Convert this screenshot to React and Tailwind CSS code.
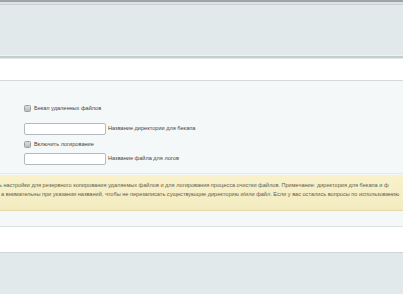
export default function App() {
  const font = { fontFamily: '"Liberation Sans", Arial, sans-serif' };
  const Check = ({ label }) => (
    <div className="flex items-center h-[7px] gap-[3px]">
      <div className="w-[7px] h-[7px] rounded-[1.5px] border border-[#9a9fa3] bg-gradient-to-b from-[#dcdcdc] to-[#b9bcbe]" />
      <span className="text-[5.6px] leading-none text-[#444444]">{label}</span>
    </div>
  );
  const Field = ({ label }) => (
    <div className="flex items-center gap-[2px] h-[12px]">
      <div className="w-[82px] h-[12px] rounded-[2px] border border-[#b4bbbf] bg-white" />
      <span className="text-[5.6px] leading-none text-[#444444]">{label}</span>
    </div>
  );
  return (
    <div className="w-[403px] h-[294px] overflow-hidden bg-white flex flex-col" style={font}>
      <div className="h-[2px] bg-[#9ea5a8]" />
      <div className="h-[2px] bg-[#dde3e5]" />
      <div className="h-[1px] bg-[#c9d0d3]" />
      <div className="h-[50px] bg-[#e2e9eb]" />
      <div className="h-[1px] bg-[#edf1f2]" />
      <div className="h-[2px] bg-[#c6cdd0]" />
      <div className="h-[1px] bg-[#e3e7e8]" />
      <div className="h-[21px] bg-white" />
      <div className="h-[1px] bg-[#d4d9db]" />
      <div className="bg-[#f4f8f9] flex flex-col">
        <div className="pl-[24px] pt-[24px] flex flex-col">
          <Check label="Бекап удаленных файлов" />
          <div className="h-[11px]" />
          <Field label="Название директории для бекапа" />
          <div className="h-[6px]" />
          <Check label="Включить логирование" />
          <div className="h-[5px]" />
          <Field label="Название файла для логов" />
        </div>
        <div className="h-[8px]" />
        <div className="h-[1px] bg-[#e4e8e9]" />
        <div className="h-[1px]" />
        <div className="h-[36px] bg-gradient-to-b from-[#f8f1cb] to-[#f3ebc0] border-b border-[#e2d9a6] flex flex-col pt-[6px] overflow-hidden">
          <p className="whitespace-nowrap text-[5.6px] leading-[9px] text-[#5e5d50] -ml-[1px]">
            ь настройки для резервного копирования удаляемых файлов и для логирования процесса очистки файлов. Примечание: директория для бекапа и ф
          </p>
          <p className="whitespace-nowrap text-[5.6px] leading-[9px] text-[#5e5d50] ml-[1px]">
            а внимательны при указании названий, чтобы не перезаписать существующие директорию и/или файл. Если у вас остались вопросы по использованию
          </p>
        </div>
        <div className="h-[15px]" />
      </div>
      <div className="h-[1px] bg-[#dde2e3]" />
      <div className="h-[25px] bg-white" />
      <div className="h-[1px] bg-[#cfd5d7]" />
      <div className="flex-1 bg-[#e2e9eb]" />
    </div>
  );
}
